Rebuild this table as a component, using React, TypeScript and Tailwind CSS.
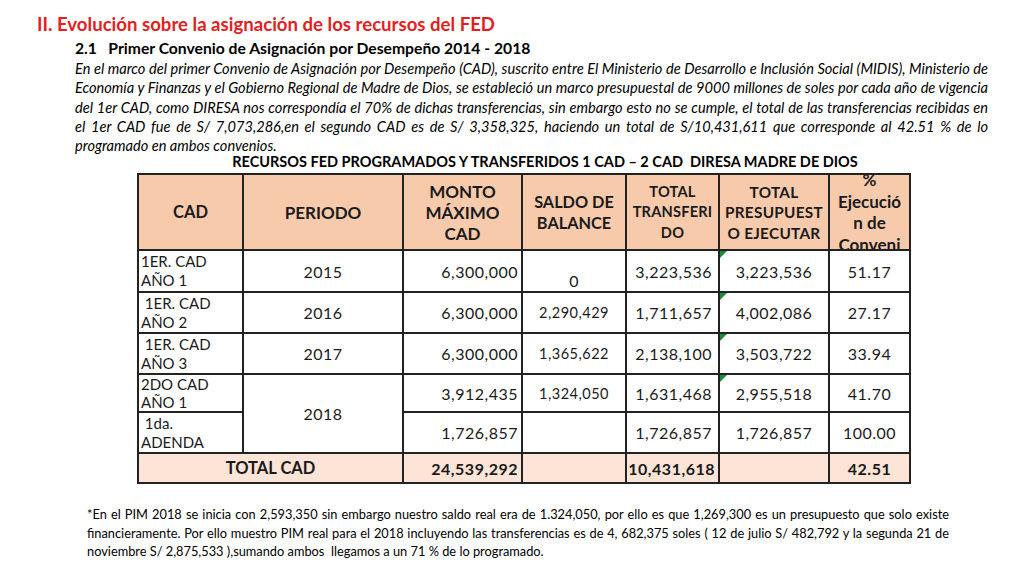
import React from "react";

const F = { fontFamily: "Lato, 'Open Sans', sans-serif" };

function Tri() {
  return (
    <div className="absolute left-0 top-0 w-0 h-0 border-t-[7px] border-t-[#1f8a3a] border-r-[7px] border-r-transparent" />
  );
}

const b = "border-2 border-[#222] p-0";
const td = b + " align-middle";
const num = td + " text-[16px] tracking-[0.5px]";
const sal = td + " text-center text-[14.5px] tracking-[0.5px]";

export default function App() {
  return (
    <div className="w-[1024px] h-[576px] bg-white text-[#1a1a1a] overflow-hidden relative" style={F}>
      <div className="pt-[12px]">
        <div className="pl-[37px] h-[24px] leading-[24px] text-[18.6px] font-bold text-[#e41e1e]">
          II. Evolución sobre la asignación de los recursos del FED
        </div>
        <div className="pl-[75px] mt-[1px] h-[22px] leading-[22px] text-[15.7px] font-bold text-black whitespace-pre">
          {"2.1   Primer Convenio de Asignación por Desempeño 2014 - 2018"}
        </div>
        <div className="ml-[75px] w-[913px] italic text-[14.6px] leading-[19.3px] text-black">
          <div className="text-justify [text-align-last:justify]">
            En el marco del primer Convenio de Asignación por Desempeño (CAD), suscrito entre El Ministerio de Desarrollo e Inclusión Social (MIDIS), Ministerio de
          </div>
          <div className="text-justify [text-align-last:justify]">
            Economía y Finanzas y el Gobierno Regional de Madre de Dios, se estableció un marco presupuestal de 9000 millones de soles por cada año de vigencia
          </div>
          <div className="text-justify [text-align-last:justify]">
            del 1er CAD, como DIRESA nos correspondía el 70% de dichas transferencias, sin embargo esto no se cumple, el total de las transferencias recibidas en
          </div>
          <div className="text-justify [text-align-last:justify]">
            el 1er CAD fue de S/ 7,073,286,en el segundo CAD  es de S/ 3,358,325, haciendo un total de S/10,431,611 que corresponde  al 42.51 %  de lo
          </div>
          <div>programado en ambos convenios.</div>
        </div>
        <div className="ml-[200px] w-[690px] text-center h-[14px] leading-[14px] text-[14.5px] font-bold text-black whitespace-pre">
          {"RECURSOS FED PROGRAMADOS Y TRANSFERIDOS 1 CAD – 2 CAD  DIRESA MADRE DE DIOS"}
        </div>
        <table className="ml-[137px] mt-[4px] border-collapse table-fixed w-[772px] text-[15px] leading-[19px]">
          <colgroup>
            <col className="w-[105px]" />
            <col className="w-[160px]" />
            <col className="w-[119px]" />
            <col className="w-[104px]" />
            <col className="w-[93px]" />
            <col className="w-[110px]" />
            <col className="w-[81px]" />
          </colgroup>
          <tbody>
            <tr className="h-[76px] bg-[#f7caac] font-bold text-center">
              <td className={td + " text-[16.5px]"}>CAD</td>
              <td className={td + " text-[17px]"}>PERIODO</td>
              <td className={td + " text-[17px] leading-[21px]"}>
                MONTO
                <br />
                MÁXIMO
                <br />
                CAD
              </td>
              <td className={td + " text-[16.3px] leading-[21px]"}>
                SALDO DE
                <br />
                BALANCE
              </td>
              <td className={td + " text-[14.6px] tracking-[0.2px] leading-[20.5px]"}>
                TOTAL
                <br />
                TRANSFERI
                <br />
                DO
              </td>
              <td className={td + " text-[15.3px] tracking-[0.3px] leading-[20.5px]"}>
                TOTAL
                <br />
                PRESUPUEST
                <br />
                O EJECUTAR
              </td>
              <td className={td + " text-[17px] leading-[21.5px]"}>
                <div className="h-[74px] overflow-hidden flex flex-col justify-center items-center">
                  <div className="shrink-0">
                    %
                    <br />
                    Ejecució
                    <br />
                    n de
                    <br />
                    Conveni
                  </div>
                </div>
              </td>
            </tr>
            <tr className="h-[42px]">
              <td className={td + " pl-[2px]"}>
                1ER. CAD
                <br />
                AÑO 1
              </td>
              <td className={num + " text-center"}>2015</td>
              <td className={num + " text-right pr-[3px]"}>6,300,000</td>
              <td className={b + " align-bottom text-center text-[16px] pb-[1px]"}>0</td>
              <td className={num + " text-right pr-[6px]"}>3,223,536</td>
              <td className={num + " text-center relative"}>
                <Tri />
                3,223,536
              </td>
              <td className={num + " text-center"}>51.17</td>
            </tr>
            <tr className="h-[41px]">
              <td className={td + " pl-[2px]"}>
                {"\u00a01ER. CAD"}
                <br />
                AÑO 2
              </td>
              <td className={num + " text-center"}>2016</td>
              <td className={num + " text-right pr-[3px]"}>6,300,000</td>
              <td className={sal}>2,290,429</td>
              <td className={num + " text-right pr-[6px]"}>1,711,657</td>
              <td className={num + " text-center relative"}>
                <Tri />
                4,002,086
              </td>
              <td className={num + " text-center"}>27.17</td>
            </tr>
            <tr className="h-[41px]">
              <td className={td + " pl-[2px]"}>
                {"\u00a01ER. CAD"}
                <br />
                AÑO 3
              </td>
              <td className={num + " text-center"}>2017</td>
              <td className={num + " text-right pr-[3px]"}>6,300,000</td>
              <td className={sal}>1,365,622</td>
              <td className={num + " text-right pr-[6px]"}>2,138,100</td>
              <td className={num + " text-center relative"}>
                <Tri />
                3,503,722
              </td>
              <td className={num + " text-center"}>33.94</td>
            </tr>
            <tr className="h-[35px]">
              <td className={td + " pl-[2px] leading-[18px]"}>
                2DO CAD
                <br />
                AÑO 1
              </td>
              <td className={num + " text-center"} rowSpan={2}>
                2018
              </td>
              <td className={num + " text-right pr-[3px]"}>3,912,435</td>
              <td className={sal}>1,324,050</td>
              <td className={num + " text-right pr-[6px]"}>1,631,468</td>
              <td className={num + " text-center relative"}>
                <Tri />
                2,955,518
              </td>
              <td className={num + " text-center"}>41.70</td>
            </tr>
            <tr className="h-[41px]">
              <td className={td + " pl-[2px]"}>
                {"\u00a01da."}
                <br />
                ADENDA
              </td>
              <td className={num + " text-right pr-[3px]"}>1,726,857</td>
              <td className={td}></td>
              <td className={num + " text-right pr-[6px]"}>1,726,857</td>
              <td className={num + " text-center"}>1,726,857</td>
              <td className={num + " text-center"}>100.00</td>
            </tr>
            <tr className="h-[30px] bg-[#fce4d6] font-bold">
              <td className={td + " text-center text-[16.5px]"} colSpan={2}>
                TOTAL CAD
              </td>
              <td className={num + " text-right pr-[3px]"}>24,539,292</td>
              <td className={td}></td>
              <td className={num + " text-right pr-[3px]"}>10,431,618</td>
              <td className={td}></td>
              <td className={num + " text-center"}>42.51</td>
            </tr>
          </tbody>
        </table>
        <div className="ml-[87px] mt-[21px] w-[862px] text-[12.8px] leading-[18.5px] text-black">
          <div className="text-justify [text-align-last:justify]">
            *En el PIM 2018 se inicia con 2,593,350 sin embargo nuestro  saldo real era de 1.324,050, por ello es que 1,269,300 es un presupuesto que solo existe
          </div>
          <div className="text-justify [text-align-last:justify]">
            financieramente.  Por ello muestro PIM real  para el 2018 incluyendo las transferencias es de 4, 682,375 soles  ( 12 de julio S/ 482,792 y la segunda  21 de
          </div>
          <div className="whitespace-pre">
            {"noviembre S/ 2,875,533 ),sumando ambos  llegamos a un 71 % de lo programado."}
          </div>
        </div>
      </div>
    </div>
  );
}
